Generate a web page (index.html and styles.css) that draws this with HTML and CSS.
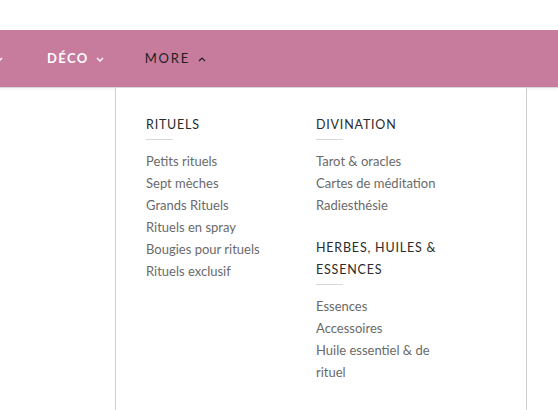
FILE: index.html
```html
<!DOCTYPE html>
<html lang="fr">
<head>
<meta charset="utf-8">
<title>Menu</title>
<link rel="stylesheet" href="styles.css">
</head>
<body>
<div class="topstrip"></div>
<header class="header">
  <nav class="nav">
    <ul class="nav-list">
      <li class="nav-item nav-item--cut">
        <svg class="chev" width="8" height="5" viewBox="0 0 8 5"><path d="M1 1l3 3 3-3" fill="none" stroke="#fff" stroke-width="1.4"/></svg>
      </li>
      <li class="nav-item nav-item--light">
        <span>DÉCO</span>
        <svg class="chev" width="8" height="5" viewBox="0 0 8 5"><path d="M1 1l3 3 3-3" fill="none" stroke="#fff" stroke-width="1.4"/></svg>
      </li>
      <li class="nav-item nav-item--active">
        <span>MORE</span>
        <svg class="chev" width="8" height="5" viewBox="0 0 8 5"><path d="M1 4l3-3 3 3" fill="none" stroke="#222" stroke-width="1.2"/></svg>
      </li>
    </ul>
  </nav>
  <div class="dropdown">
    <div class="dropdown-grid">
      <div class="col">
        <h3 class="col-title">Rituels</h3>
        <ul class="col-list">
          <li>Petits rituels</li>
          <li>Sept mèches</li>
          <li>Grands Rituels</li>
          <li>Rituels en spray</li>
          <li>Bougies pour rituels</li>
          <li>Rituels exclusif</li>
        </ul>
      </div>
      <div class="col">
        <h3 class="col-title">Divination</h3>
        <ul class="col-list">
          <li>Tarot &amp; oracles</li>
          <li>Cartes de méditation</li>
          <li>Radiesthésie</li>
        </ul>
        <h3 class="col-title col-title--spaced">Herbes, huiles &amp; essences</h3>
        <ul class="col-list">
          <li>Essences</li>
          <li>Accessoires</li>
          <li>Huile essentiel &amp; de rituel</li>
        </ul>
      </div>
    </div>
  </div>
</header>
</body>
</html>
```
FILE: styles.css
```css
html, body {
  margin: 0;
  padding: 0;
  background: #fff;
  overflow: hidden;
  height: 410px;
}
body {
  font-family: "Lato", "Open Sans", sans-serif;
}
.topstrip {
  height: 30px;
}
.header {
  position: relative;
}
.nav {
  background: #c87c9d;
  height: 57px;
  border-bottom: 1px solid #d9d9d9;
  box-shadow: 0 1px 3px rgba(0, 0, 0, 0.06);
}
.nav-list {
  list-style: none;
  margin: 0;
  padding: 0;
  height: 100%;
  display: flex;
  align-items: center;
  gap: 44px;
  margin-left: -5px;
}
.nav-item {
  display: flex;
  align-items: center;
  gap: 8px;
  font-size: 13px;
  letter-spacing: 1.4px;
  line-height: 1;
}
.nav-item--light {
  color: #fff;
  font-weight: 700;
  gap: 7px;
}
.nav-item--active {
  color: #1e1e1e;
  font-weight: 400;
  letter-spacing: 1.8px;
  margin-left: -3px;
}
.chev {
  display: block;
  margin-top: 1px;
}
.dropdown {
  position: absolute;
  top: 100%;
  left: 115px;
  width: 412px;
  height: 322px;
  background: #fff;
  border-left: 1px solid #cfcfcf;
  border-right: 1px solid #cfcfcf;
  padding: 26px 30px 0;
  box-sizing: border-box;
}
.dropdown-grid {
  display: grid;
  grid-template-columns: 140px 140px;
  column-gap: 30px;
}
.col-title {
  margin: 0;
  font-size: 12.5px;
  font-weight: 400;
  text-transform: uppercase;
  letter-spacing: 0.8px;
  line-height: 22px;
  color: #2b2b2b;
}
.col-title::after {
  content: "";
  display: block;
  width: 27px;
  height: 1px;
  background: #d8d8d8;
  margin-top: 3px;
  margin-bottom: 10px;
}
.col-title--spaced {
  margin-top: 21px;
}
.col-list {
  list-style: none;
  margin: 0;
  padding: 0;
}
.col-list li {
  font-size: 13px;
  line-height: 22px;
  color: #6a6a6a;
}
```
